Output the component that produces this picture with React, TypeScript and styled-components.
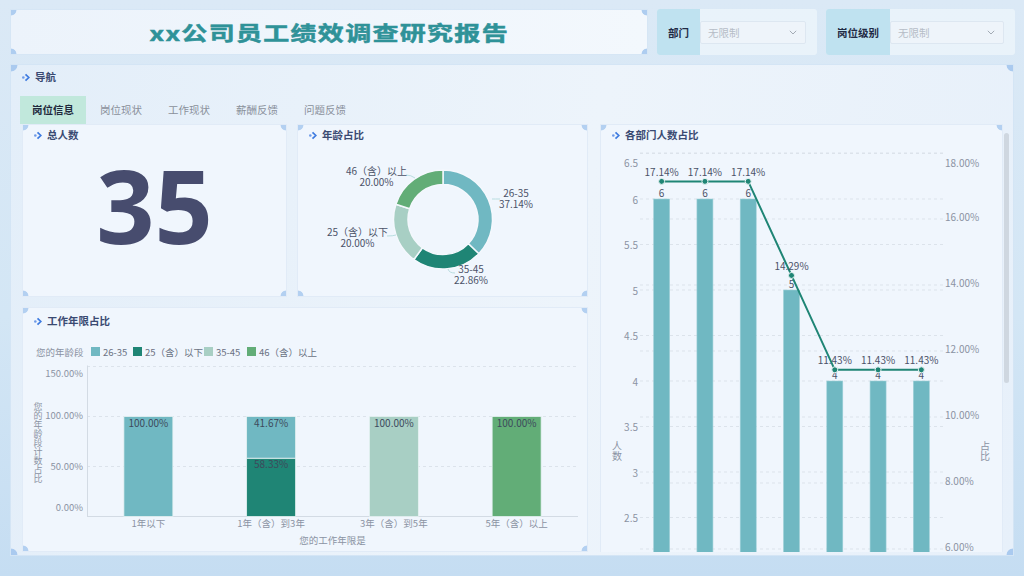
import React from 'react'
import styled, { createGlobalStyle } from 'styled-components'

const TEAL = '#70b8c2'
const DARK = '#1f8575'
const LIGHT = '#a8cfc4'
const GREEN = '#62ad77'
const LABEL = '#4b5268'
const AXIS = '#8b93a3'
const GRID = '#dce3eb'

const corners = (color: string, r: number) => `
  radial-gradient(circle at 0 0, ${color} ${r}px, transparent ${r + 0.8}px),
  radial-gradient(circle at 100% 0, ${color} ${r}px, transparent ${r + 0.8}px),
  radial-gradient(circle at 0 100%, ${color} ${r}px, transparent ${r + 0.8}px),
  radial-gradient(circle at 100% 100%, ${color} ${r}px, transparent ${r + 0.8}px)
`

const GlobalStyle = createGlobalStyle`
  html, body {
    margin: 0;
    padding: 0;
  }
  body {
    width: 1024px;
    height: 576px;
    overflow: hidden;
    font-family: "Noto Sans CJK SC", "Noto Sans", sans-serif;
    background: linear-gradient(180deg, #dbe9f6 0%, #d3e6f5 55%, #c5ddf2 100%);
  }
`

const Page = styled.div`
  box-sizing: border-box;
  width: 1024px;
  height: 576px;
  padding: 9px 10px 0 10px;
  display: flex;
  flex-direction: column;
`

const Header = styled.header`
  display: flex;
  gap: 9px;
  height: 46px;
`

const TitleBox = styled.div`
  box-sizing: border-box;
  width: 638px;
  flex: none;
  display: flex;
  align-items: center;
  justify-content: center;
  background: ${corners('#aecdf0', 5)}, linear-gradient(90deg, #ecf3fb, #f3f8fd);
  border: 1px solid #d6e6f5;
`

const Title = styled.h1`
  margin: 0;
  font-size: 20px;
  font-weight: 700;
  color: #2f9298;
  letter-spacing: 1px;
  white-space: nowrap;
  -webkit-text-stroke: 0.5px #2f9298;
  transform: scaleX(1.3);
`

const Filter = styled.div<{ $w: number }>`
  width: ${(p) => p.$w}px;
  flex: none;
  display: flex;
  background: rgba(238, 245, 251, 0.75);
  border-radius: 3px;
  overflow: hidden;
`

const FilterLabel = styled.div<{ $w: number }>`
  width: ${(p) => p.$w}px;
  flex: none;
  display: flex;
  align-items: center;
  justify-content: center;
  background: #bfe2f0;
  font-size: 10.5px;
  font-weight: 700;
  color: #1f2b45;
`

const Select = styled.div`
  flex: 1;
  margin: 12px 11px 11px 0;
  padding: 0 8px 0 7px;
  display: flex;
  align-items: center;
  justify-content: space-between;
  background: #eef4fa;
  border: 1px solid #dde7f1;
  border-radius: 2px;
  font-size: 10.5px;
  color: #b6bdc7;
`

const Panel = styled.section`
  box-sizing: border-box;
  margin-top: 9px;
  height: 492px;
  padding: 5px 4px 3px 11px;
  display: flex;
  flex-direction: column;
  background: ${corners('#aacaef', 6)}, linear-gradient(100deg, #e3eef9 0%, #edf4fb 55%, #e7f0fa 100%);
  border: 1px solid #d4e5f5;
`

const SectionTitle = styled.div<{ $pt?: number }>`
  display: flex;
  align-items: center;
  gap: 5px;
  padding: ${(p) => p.$pt ?? 0}px 0 0 ${(p) => (p.$pt === undefined ? 0 : 11)}px;
  height: 14px;
  font-size: 10.5px;
  font-weight: 700;
  line-height: 14px;
  color: #3a4a72;
`

const Tabs = styled.nav`
  display: flex;
  margin: 12px 0 0 -2px;
  height: 28px;
`

const Tab = styled.div<{ $active?: boolean }>`
  padding: 0 12px;
  margin-right: 2px;
  line-height: 28px;
  font-size: 10.5px;
  font-weight: ${(p) => (p.$active ? 700 : 400)};
  color: ${(p) => (p.$active ? '#1f2a3d' : '#8a909b')};
  background: ${(p) => (p.$active ? '#c1e8dc' : 'transparent')};
`

const Scroll = styled.div`
  flex: 1;
  min-height: 0;
  display: flex;
`

const Viewport = styled.div`
  flex: 1;
  min-width: 0;
  overflow: hidden;
`

const ScrollTrack = styled.div`
  width: 6px;
  flex: none;
  padding-top: 9px;
`

const ScrollThumb = styled.div<{ $h: number }>`
  width: 5px;
  height: ${(p) => p.$h}px;
  margin-left: 1px;
  border-radius: 3px;
  background: #cfd7e0;
`

const Grid = styled.div`
  display: grid;
  grid-template-columns: 265px 291px 1fr;
  grid-template-rows: 173px 1fr;
  gap: 10px;
`

const Card = styled.div<{ $wide?: boolean; $tall?: boolean }>`
  box-sizing: border-box;
  display: flex;
  flex-direction: column;
  background: ${corners('#b3d0f1', 5)}, #f0f6fd;
  border: 1px solid #e1ebf7;
  ${(p) => p.$wide && 'grid-column: 1 / span 2; height: 245px; align-self: start;'}
  ${(p) => p.$tall && 'grid-column: 3; grid-row: 1 / span 2; margin-left: 2px; padding-bottom: 20px;'}
`

const BigNumber = styled.div`
  flex: 1;
  display: flex;
  align-items: center;
  justify-content: center;
  padding-bottom: 29px;
  font-family: "Open Sans", "Noto Sans", sans-serif;
  font-size: 102px;
  font-weight: 700;
  line-height: 1;
  color: #474c6e;
`

const Chart = styled.svg`
  display: block;
  flex: none;
  font-family: "Noto Sans CJK SC", "Noto Sans", sans-serif;

  .vertical {
    writing-mode: vertical-rl;
    text-orientation: upright;
  }
`

const NavIcon = () => (
  <svg width="8" height="9" viewBox="0 0 8 9">
    <circle cx="1.3" cy="4.5" r="1.3" fill="#6e9ae8" />
    <path d="M3.5 1.3 L6.8 4.5 L3.5 7.7" fill="none" stroke="#3e7be0" strokeWidth="1.7" />
  </svg>
)

const Chevron = () => (
  <svg width="8" height="5" viewBox="0 0 8 5">
    <path d="M0.8 0.8 L4 4 L7.2 0.8" fill="none" stroke="#a3abb5" strokeWidth="1" />
  </svg>
)

// ---- 年龄占比 donut ----
const AGE = [
  { pct: 37.14, color: TEAL },
  { pct: 22.86, color: DARK },
  { pct: 20, color: LIGHT },
  { pct: 20, color: GREEN },
]

const arc = (cx: number, cy: number, R: number, r: number, a0: number, a1: number) => {
  const pt = (rad: number, a: number) => `${cx + rad * Math.sin(a)} ${cy - rad * Math.cos(a)}`
  const large = a1 - a0 > Math.PI ? 1 : 0
  return `M${pt(R, a0)} A${R} ${R} 0 ${large} 1 ${pt(R, a1)} L${pt(r, a1)} A${r} ${r} 0 ${large} 0 ${pt(r, a0)} Z`
}

const Donut = () => {
  let start = 0
  const slices = AGE.map((s) => {
    const a0 = start
    const a1 = start + (s.pct / 100) * Math.PI * 2
    start = a1
    return <path key={s.color} d={arc(145, 77.5, 49.5, 35, a0, a1)} fill={s.color} stroke="#f4f8fd" strokeWidth="1.5" />
  })
  const lbl = (x: number, y: number, a: string, b: string) => (
    <text fontSize="10" fill={LABEL} textAnchor="middle" dominantBaseline="central">
      <tspan x={x} y={y}>{a}</tspan>
      <tspan x={x} y={y + 10.5}>{b}</tspan>
    </text>
  )
  return (
    <Chart width="289" height="155">
      {slices}
      <g fill="none" stroke="#b9dde0" strokeWidth="1">
        <path d="M194 57 Q197 57 202 57" />
        <path d="M150 127 Q151 131 157 131" />
        <path d="M98 93 Q95 94 89 94" />
        <path d="M117 36 Q113 33 108 33" />
      </g>
      {lbl(218, 50, '26-35', '37.14%')}
      {lbl(173, 126, '35-45', '22.86%')}
      {lbl(59.5, 89, '25（含）以下', '20.00%')}
      {lbl(78.5, 28, '46（含）以上', '20.00%')}
    </Chart>
  )
}

// ---- 各部门人数占比 bar + line ----
const DEPT = [
  { n: 6, pct: 17.14 },
  { n: 6, pct: 17.14 },
  { n: 6, pct: 17.14 },
  { n: 5, pct: 14.29 },
  { n: 4, pct: 11.43 },
  { n: 4, pct: 11.43 },
  { n: 4, pct: 11.43 },
]
const yL = (v: number) => 57 + (6 - v) * 91
const yR = (p: number) => 407 - (p - 6) * 33
const LEFT_TICKS = [6.5, 6, 5.5, 5, 4.5, 4, 3.5, 3, 2.5, 2, 1.5, 1, 0.5, 0]
const RIGHT_TICKS = [18, 16, 14, 12, 10, 8, 6, 4, 2, 0]
// the card is taller than the panel; only these labels sit above the fold
const LEFT_LABELS = LEFT_TICKS.filter((v) => v >= 2.5)
const RIGHT_LABELS = RIGHT_TICKS.filter((p) => p >= 6)

const DeptChart = () => {
  const band = 303 / DEPT.length
  const cx = (i: number) => 39 + band * (i + 0.5)
  const pts = DEPT.map((d, i) => [cx(i), yR(d.pct)])
  return (
    <Chart width="400" height="640">
      <g stroke={GRID} strokeDasharray="3 3" strokeWidth="1">
        {LEFT_TICKS.map((v) => (
          <line key={'l' + v} x1="39" x2="342" y1={yL(v)} y2={yL(v)} />
        ))}
        {RIGHT_TICKS.map((p) => (
          <line key={'r' + p} x1="39" x2="342" y1={yR(p)} y2={yR(p)} />
        ))}
      </g>
      <g fontSize="10" fill={AXIS} dominantBaseline="central">
        {LEFT_LABELS.map((v) => (
          <text key={v} x="37" y={v === 6.5 ? 20 : yL(v)} textAnchor="end">
            {v}
          </text>
        ))}
        {RIGHT_LABELS.map((p) => (
          <text key={p} x="344" y={p === 18 ? 20 : yR(p) - 3}>
            {p.toFixed(2)}%
          </text>
        ))}
      </g>
      <g fontSize="10" fill={AXIS} textAnchor="middle">
        <text className="vertical" x="16" y="309">人数</text>
        <text className="vertical" x="384" y="309">占比</text>
      </g>
      <line x1="39" x2="342" y1={yL(0)} y2={yL(0)} stroke="#d3dbe4" />
      {DEPT.map((d, i) => (
        <rect key={i} x={cx(i) - 8} y={yL(d.n)} width="16" height={yL(0) - yL(d.n)} fill={TEAL} stroke="#9fd0d8" strokeWidth="0.6" />
      ))}
      <g fontSize="10" fill={LABEL} textAnchor="middle" dominantBaseline="central">
        {DEPT.map((d, i) => (
          <text key={i} x={cx(i)} y={yL(d.n) - 7}>
            {d.n}
          </text>
        ))}
      </g>
      <polyline points={pts.map((p) => p.join(',')).join(' ')} fill="none" stroke={DARK} strokeWidth="2" />
      {pts.map(([x, y], i) => (
        <circle key={i} cx={x} cy={y} r="3" fill={DARK} stroke="#e9f3f4" strokeWidth="1" />
      ))}
      <g fontSize="10" fill={LABEL} textAnchor="middle" dominantBaseline="central">
        {DEPT.map((d, i) => (
          <text key={i} x={cx(i)} y={yR(d.pct) - 10}>
            {d.pct.toFixed(2)}%
          </text>
        ))}
      </g>
    </Chart>
  )
}

// ---- 工作年限占比 stacked bars ----
const LEGEND = [
  { name: '26-35', color: TEAL, x: 68 },
  { name: '25（含）以下', color: DARK, x: 110 },
  { name: '35-45', color: LIGHT, x: 181 },
  { name: '46（含）以上', color: GREEN, x: 224 },
]
const YEARS = [
  { name: '1年以下', parts: [{ pct: 100, color: TEAL }] },
  {
    name: '1年（含）到3年',
    parts: [
      { pct: 58.33, color: DARK },
      { pct: 41.67, color: TEAL },
    ],
  },
  { name: '3年（含）到5年', parts: [{ pct: 100, color: LIGHT }] },
  { name: '5年（含）以上', parts: [{ pct: 100, color: GREEN }] },
]

const YearsChart = () => {
  const y0 = 188.5
  const band = 491 / YEARS.length
  const cx = (i: number) => 64 + band * (i + 0.5)
  return (
    <Chart width="564" height="222">
      <g fontSize="9.5" dominantBaseline="central">
        <text x="13" y="23.5" fill={AXIS}>您的年龄段</text>
        {LEGEND.map((l) => (
          <g key={l.name}>
            <rect x={l.x} y="19" width="9" height="9" fill={l.color} />
            <text x={l.x + 12} y="23.5" fill="#6b7283">
              {l.name}
            </text>
          </g>
        ))}
      </g>
      <g stroke={GRID} strokeDasharray="3 3">
        {[150, 100, 50].map((p) => (
          <line key={p} x1="64" x2="555" y1={y0 - p} y2={y0 - p} />
        ))}
      </g>
      <line x1="64.5" x2="64.5" y1={y0 - 151} y2={y0} stroke="#d3dbe4" />
      <line x1="64" x2="555" y1={y0} y2={y0} stroke="#d3dbe4" />
      <g fontSize="9.5" fill={AXIS} textAnchor="end" dominantBaseline="central">
        <text x="60" y="45">150.00%</text>
        <text x="60" y="87">100.00%</text>
        <text x="60" y="138">50.00%</text>
        <text x="60" y="179">0.00%</text>
      </g>
      <text className="vertical" x="15" y="114.5" fontSize="9" fill={AXIS} textAnchor="middle">
        您的年龄段计数占比
      </text>
      {YEARS.map((yr, i) => {
        let base = y0
        return (
          <g key={yr.name}>
            {yr.parts.map((p) => {
              const top = base - p.pct
              base = top
              return (
                <g key={p.color}>
                  <rect x={cx(i) - 24.5} y={top} width="49" height={p.pct} fill={p.color} stroke="#e6f2f3" strokeWidth="0.8" />
                  <text x={cx(i)} y={top + 5.5} fontSize="10" fill="#3d4a5c" textAnchor="middle" dominantBaseline="central">
                    {p.pct.toFixed(2)}%
                  </text>
                </g>
              )
            })}
            <text x={cx(i)} y="195" fontSize="9.5" fill={AXIS} textAnchor="middle" dominantBaseline="central">
              {yr.name}
            </text>
          </g>
        )
      })}
      <text x="309.5" y="212" fontSize="9.5" fill={AXIS} textAnchor="middle" dominantBaseline="central">
        您的工作年限是
      </text>
    </Chart>
  )
}

const TABS = ['岗位信息', '岗位现状', '工作现状', '薪酬反馈', '问题反馈']

export default function App() {
  return (
    <>
      <GlobalStyle />
      <Page>
        <Header>
          <TitleBox>
            <Title>xx公司员工绩效调查研究报告</Title>
          </TitleBox>
          <Filter $w={160}>
            <FilterLabel $w={43}>部门</FilterLabel>
            <Select>
              无限制
              <Chevron />
            </Select>
          </Filter>
          <Filter $w={189}>
            <FilterLabel $w={64}>岗位级别</FilterLabel>
            <Select>
              无限制
              <Chevron />
            </Select>
          </Filter>
        </Header>
        <Panel>
          <SectionTitle>
            <NavIcon />
            导航
          </SectionTitle>
          <Tabs>
            {TABS.map((t, i) => (
              <Tab key={t} $active={i === 0}>
                {t}
              </Tab>
            ))}
          </Tabs>
          <Scroll>
            <Viewport>
              <Grid>
                <Card>
                  <SectionTitle $pt={3}>
                    <NavIcon />
                    总人数
                  </SectionTitle>
                  <BigNumber>35</BigNumber>
                </Card>
                <Card>
                  <SectionTitle $pt={3}>
                    <NavIcon />
                    年龄占比
                  </SectionTitle>
                  <Donut />
                </Card>
                <Card $tall>
                  <SectionTitle $pt={3}>
                    <NavIcon />
                    各部门人数占比
                  </SectionTitle>
                  <DeptChart />
                </Card>
                <Card $wide>
                  <SectionTitle $pt={6}>
                    <NavIcon />
                    工作年限占比
                  </SectionTitle>
                  <YearsChart />
                </Card>
              </Grid>
            </Viewport>
            <ScrollTrack>
              <ScrollThumb $h={250} />
            </ScrollTrack>
          </Scroll>
        </Panel>
      </Page>
    </>
  )
}
